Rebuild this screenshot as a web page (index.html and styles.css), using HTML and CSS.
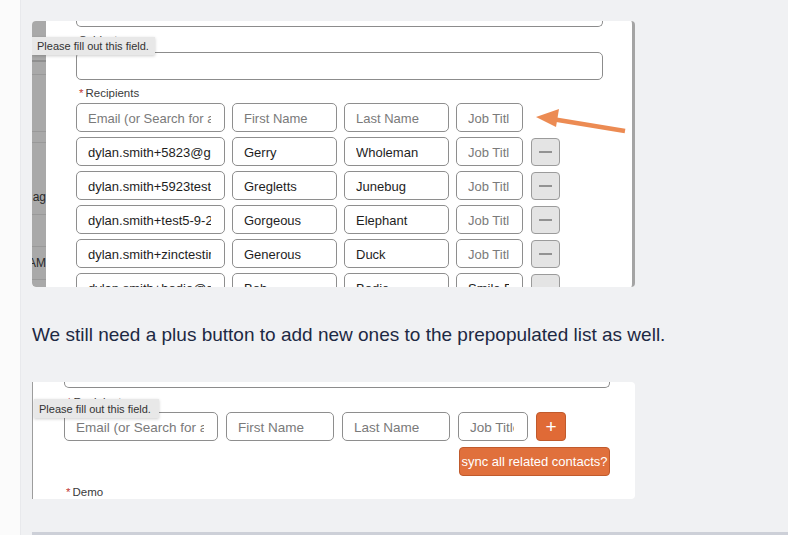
FILE: index.html
```html
<!DOCTYPE html>
<html lang="en">
<head>
    <title>Recipients feedback</title>
    <link rel="stylesheet" href="styles.css">
</head>
<body>
<div class="page">
    <div class="rail"></div>
    <div class="main">

        <!-- first screenshot: prepopulated recipients -->
        <div class="shot shot-one">
            <div class="strip">
                <div class="cell c1"></div>
                <div class="cell c2"></div>
                <div class="cell c3"></div>
                <div class="cell c4"></div>
                <div class="cell c5"><span>ag</span></div>
                <div class="cell c6"></div>
                <div class="cell c7"><span>AM</span></div>
                <div class="cell c8"></div>
            </div>
            <div class="form form-one">
                <div class="frag"></div>
                <div class="label label-hidden">Subject</div>
                <div class="box"></div>
                <div class="label label-rec"><span class="req">*</span>Recipients</div>
                <div class="row first-row">
                    <input class="field email" placeholder="Email (or Search for an existing contact)">
                    <input class="field name" placeholder="First Name">
                    <input class="field name" placeholder="Last Name">
                    <input class="field job" placeholder="Job Title">
                </div>
                <div class="row">
                    <input class="field email" value="dylan.smith+5823@gmail.com">
                    <input class="field name" value="Gerry">
                    <input class="field name" value="Wholeman">
                    <input class="field job" placeholder="Job Title">
                    <button class="minus"><span></span></button>
                </div>
                <div class="row">
                    <input class="field email" value="dylan.smith+5923test@gmail.com">
                    <input class="field name" value="Gregletts">
                    <input class="field name" value="Junebug">
                    <input class="field job" placeholder="Job Title">
                    <button class="minus"><span></span></button>
                </div>
                <div class="row">
                    <input class="field email" value="dylan.smith+test5-9-23@gmail.com">
                    <input class="field name" value="Gorgeous">
                    <input class="field name" value="Elephant">
                    <input class="field job" placeholder="Job Title">
                    <button class="minus"><span></span></button>
                </div>
                <div class="row">
                    <input class="field email" value="dylan.smith+zinctesting@gmail.com">
                    <input class="field name" value="Generous">
                    <input class="field name" value="Duck">
                    <input class="field job" placeholder="Job Title">
                    <button class="minus"><span></span></button>
                </div>
                <div class="row">
                    <input class="field email" value="dylan.smith+bodie@gmail.com">
                    <input class="field name" value="Bob">
                    <input class="field name" value="Bodie">
                    <input class="field job" value="Smile Pro">
                    <button class="minus"><span></span></button>
                </div>
            </div>
            <div class="tooltip tip-one">Please fill out this field.</div>
            <svg class="arrow" width="100" height="30" viewBox="0 0 100 30">
                <line x1="20" y1="12" x2="93" y2="24" stroke="#ec8b53" stroke-width="4.5"/>
                <polygon points="4,10 27,2 24,20" fill="#ec8b53"/>
            </svg>
        </div>

        <p class="comment">We still need a plus button to add new ones to the prepopulated list as well.</p>

        <!-- second screenshot: new recipient row -->
        <div class="shot shot-two">
            <div class="form form-two">
                <div class="frag"></div>
                <div class="label label-hidden"><span class="req">*</span>Recipients</div>
                <div class="row">
                    <input class="field email" placeholder="Email (or Search for an existing contact)">
                    <input class="field name" placeholder="First Name">
                    <input class="field name" placeholder="Last Name">
                    <input class="field job" placeholder="Job Title">
                    <button class="plus">+</button>
                </div>
                <button class="sync">sync all related contacts?</button>
                <div class="label label-demo"><span class="req">*</span>Demo</div>
            </div>
            <div class="tooltip tip-two">Please fill out this field.</div>
        </div>

        <div class="rule"></div>
    </div>
</div>
</body>
</html>
```

FILE: styles.css
```css
body {
    margin: 0;
    background: #f0f1f3;
    font-family: "Liberation Sans", Arial, sans-serif;
    height: 535px;
    overflow: hidden;
}
.page {
    display: flex;
    height: 100vh;
}
.rail {
    width: 20px;
    background: #fbfbfb;
    border-right: 1px solid #e8e9ec;
}
.main {
    flex: 1;
    padding: 21px 0 0 11px;
}
.shot {
    width: 603px;
    background: #fff;
    position: relative;
    overflow: hidden;
    box-sizing: border-box;
}
.shot-one {
    height: 266px;
    display: flex;
    border-radius: 4px;
    border-right: 3px solid #a4a4a4;
}
.strip {
    width: 14px;
    flex: none;
    background: #a9a9a9;
    display: flex;
    flex-direction: column;
    border-radius: 0 0 0 4px;
    overflow: hidden;
}
.cell {
    border-bottom: 1px solid #999;
    box-sizing: border-box;
    font-size: 12px;
    color: #2a2a2a;
    display: flex;
    align-items: center;
    justify-content: flex-end;
    white-space: nowrap;
}
.c1 { height: 41px; border-bottom: 2px solid #8f8f8f; }
.c2 { height: 13px; }
.c3 { height: 57px; }
.c4 { height: 11px; }
.c5 { height: 72px; align-items: flex-end; padding-bottom: 10px; }
.c6 { height: 32px; }
.c7 { height: 33px; }
.c8 { height: 7px; border-bottom: none; }

.form-one {
    padding-left: 30px;
    flex: 1;
}
.form-two {
    padding-left: 31px;
}
.frag {
    height: 6px;
    width: 527px;
    box-sizing: border-box;
    border: 1px solid #8c8c8c;
    border-top: none;
    border-radius: 0 0 5px 5px;
}
.form-two .frag {
    width: 546px;
}
.box {
    width: 527px;
    height: 28px;
    margin-top: 5px;
    box-sizing: border-box;
    border: 1px solid #8c8c8c;
    border-radius: 5px;
}
.label {
    font-size: 11.5px;
    line-height: 14px;
    height: 14px;
    color: #3a3a3a;
    padding-left: 3px;
}
.label-hidden {
    margin-top: 6px;
}
.form-two .label-hidden {
    margin-top: 7px;
}
.label-rec {
    margin-top: 6px;
}
.label-demo {
    margin-top: 9px;
    padding-left: 2px;
}
.req {
    color: #c23934;
    margin-right: 2px;
}

.row {
    display: flex;
    align-items: center;
    gap: 7px;
    margin-top: 5px;
}
.first-row {
    margin-top: 3px;
}
.form-two .row {
    gap: 8px;
    margin-top: 3px;
}
.field {
    height: 29px;
    box-sizing: border-box;
    border: 1px solid #8e8e8e;
    border-radius: 5px;
    padding: 1px 13px 0 11px;
    font-family: "Liberation Sans", Arial, sans-serif;
    font-size: 13px;
    color: #1e1e1e;
    background: #fff;
    outline: none;
    margin: 0;
}
.field::placeholder {
    color: #7a7a7a;
}
.email { width: 149px; }
.name { width: 105px; }
.job { width: 67px; }
.form-two .field {
    font-size: 13.5px;
}
.form-two .email { width: 154px; }
.form-two .name { width: 108px; }
.form-two .job { width: 70px; }

.minus {
    width: 29px;
    height: 28px;
    margin-left: 1px;
    padding: 0;
    border: 1px solid #9b9b9b;
    border-radius: 4px;
    background: #e4e4e4;
    display: flex;
    align-items: center;
    justify-content: center;
}
.minus span {
    width: 13px;
    height: 2px;
    background: #929292;
}
.plus {
    width: 30px;
    height: 29px;
    padding: 0;
    border: 1px solid #c05a2c;
    border-radius: 4px;
    background: #e06a36;
    color: #fff;
    font-family: "Liberation Sans", Arial, sans-serif;
    font-size: 19px;
    line-height: 1;
}
.sync {
    display: block;
    margin: 6px 0 0 395px;
    width: 151px;
    height: 29px;
    padding: 0;
    border: 1px solid #c05a2c;
    border-radius: 4px;
    background: #e0703c;
    color: #fff;
    font-family: "Liberation Sans", Arial, sans-serif;
    font-size: 13px;
}

.tooltip {
    position: absolute;
    background: #e8e8e8;
    color: #333;
    font-size: 11px;
    line-height: 14px;
    padding: 2px 6px 2px 5px;
    box-shadow: 0 1px 3px rgba(0, 0, 0, 0.2);
    white-space: nowrap;
}
.tip-one {
    left: 0;
    top: 16px;
}
.tip-two {
    left: 1px;
    top: 17px;
    padding: 3px 8px 2px 5px;
}
.arrow {
    position: absolute;
    left: 500px;
    top: 86px;
}

.shot-two {
    height: 117px;
    border-left: 1px solid #9d9d9d;
    border-radius: 0 4px 4px 0;
}
.comment {
    font-size: 19px;
    line-height: 24px;
    color: #1d2943;
    margin: 36px 0 35px;
}
.rule {
    height: 3px;
    margin-top: 33px;
    background: #cdd0d8;
}
```
